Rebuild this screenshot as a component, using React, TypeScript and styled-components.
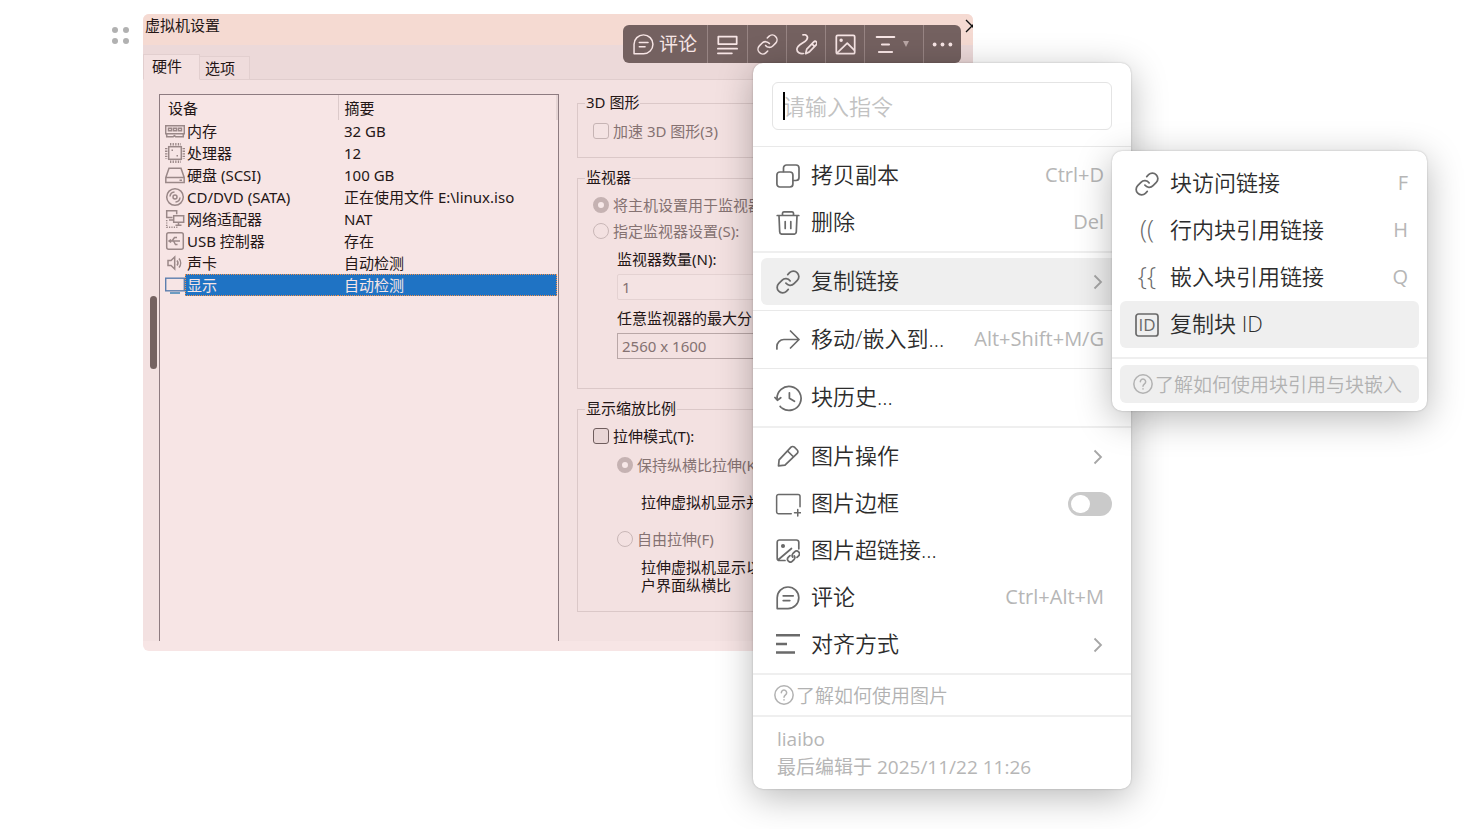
import React from "react";
import styled, { createGlobalStyle, css } from "styled-components";

const ink = "#241616";
const windowFont = `"Noto Sans", "Noto Sans CJK SC", sans-serif`;
const menuFont = `"Open Sans", "Noto Sans CJK SC", sans-serif`;

const GlobalStyle = createGlobalStyle`
  *, *::before, *::after { box-sizing: border-box; }
  html, body { margin: 0; padding: 0; background: #fff; }
  body { font-family: ${windowFont}; }
  button, input, select { font: inherit; color: inherit; margin: 0; }
  button { border: 0; background: none; padding: 0; cursor: pointer; }
`;

/* ---------- Editor block ---------- */

const Page = styled.main`
  position: relative;
  min-height: 100vh;
  padding: 14px 16px 16px 111px;
  overflow: hidden;
`;

const Block = styled.div`
  display: flex;
  align-items: flex-start;
  gap: 13px;
`;

const DragHandle = styled.button`
  flex: none;
  display: grid;
  grid-template-columns: 6px 6px;
  gap: 5px;
  width: 19px;
  padding: 13px 1px 0;
`;

const Dot = styled.span`
  width: 6px;
  height: 6px;
  border-radius: 50%;
  background: #b1b1b1;
`;

const Picture = styled.section`
  position: relative;
  flex: 0 1 830px;
  min-width: 0;
  overflow: hidden;
  border-radius: 6px;
  background: #f7e5e5;
  padding-bottom: 10px;
  color: ${ink};
  font-size: 15px;
  line-height: 18px;
`;

const ResizeGrip = styled.span`
  position: absolute;
  left: 7px;
  top: 282px;
  width: 7px;
  height: 73px;
  border-radius: 4px;
  background: #756261;
`;

const TitleBar = styled.header`
  display: flex;
  justify-content: space-between;
  height: 31px;
  padding: 2px 0 0 2px;
  background: #f5dad2;
`;

const CloseButton = styled.button`
  display: flex;
  height: 18px;
  width: 8px;
  overflow: hidden;
  svg { flex: none; }
`;

const TabStrip = styled.div`
  display: flex;
  align-items: flex-end;
  height: 35px;
  background: #ecd9d9;
  box-shadow: inset 0 -1px #e0cdcd;
`;

const Tab = styled.button<{ $active?: boolean }>`
  height: ${(p) => (p.$active ? 26 : 24)}px;
  width: ${(p) => (p.$active ? 57 : 50)}px;
  padding: 0 0 ${(p) => (p.$active ? 2 : 0)}px ${(p) => (p.$active ? 8 : 5)}px;
  text-align: left;
  line-height: 22px;
  background: ${(p) => (p.$active ? "#f3e1e1" : "#efdcdc")};
  border: 1px solid #e2cfcf;
  border-left-width: ${(p) => (p.$active ? 1 : 0)}px;
  border-bottom-color: ${(p) => (p.$active ? "#f3e1e1" : "#e2cfcf")};
`;

const Panel = styled.div`
  display: flex;
  gap: 18px;
  height: 561px;
  padding: 14px 12px 0 16px;
  background: #f3e1e1;
  overflow: hidden;
`;

const DeviceList = styled.div`
  flex: 0 0 400px;
  border: 1px solid #8d7b80;
  border-bottom: 0;
  background: #f7e5e5;
`;

const DeviceTable = styled.table`
  width: 100%;
  table-layout: fixed;
  border-collapse: collapse;
  th, td { padding: 0; text-align: left; font-weight: 400; white-space: nowrap; }
  th { height: 25px; border-right: 1px solid #dccaca; }
  th:first-child { width: 178px; padding-left: 8px; }
  th:last-child { padding-left: 6px; border-right: 2px solid #e6d5d5; }
`;

const DeviceRow = styled.tr<{ $selected?: boolean }>`
  height: 22px;
  td:last-child > span {
    display: block;
    height: 22px;
    padding-left: 6px;
    line-height: 22px;
  }
  ${(p) =>
    p.$selected &&
    css`
      color: #f7e5e5;
      td:last-child > span {
        background: #1f73c4;
        border: 1px dotted #f2914a;
        border-left: 0;
        line-height: 20px;
      }
    `}
`;

const DeviceName = styled.div<{ $selected?: boolean }>`
  display: flex;
  align-items: center;
  height: 22px;
  padding-left: 5px;
  svg { flex: none; width: 20px; height: 20px; }
  span {
    flex: 1;
    height: 22px;
    padding-left: 2px;
    line-height: 22px;
    ${(p) =>
      p.$selected &&
      css`
        background: #1f73c4;
        border: 1px dotted #f2914a;
        border-right: 0;
        padding-left: 1px;
        line-height: 20px;
      `}
  }
`;

const Settings = styled.form`
  flex: 1;
  min-width: 0;
  display: flex;
  flex-direction: column;
  gap: 11px;
`;

const Group = styled.fieldset<{ $h: number }>`
  flex: none;
  min-width: 0;
  height: ${(p) => p.$h}px;
  margin: 0;
  padding: 0 8px 0 15px;
  border: 1px solid #dbc8c8;
  white-space: nowrap;
  legend {
    margin-left: -8px;
    padding: 0 1px;
    height: 18px;
    line-height: 17px;
  }
`;

const Option = styled.label<{ $muted?: boolean; $indent?: number; $top?: number }>`
  display: flex;
  align-items: center;
  gap: 4px;
  height: 26px;
  margin-top: ${(p) => p.$top ?? 0}px;
  padding-left: ${(p) => p.$indent ?? 0}px;
  color: ${(p) => (p.$muted ? "#857272" : ink)};
`;

const Check = styled.input.attrs({ type: "checkbox" })`
  appearance: none;
  width: 16px;
  height: 16px;
  border: 1px solid #6f5d5d;
  border-radius: 3px;
  background: #e9d6d6;
  &:disabled { border-color: #c6b4b4; background: #f4e3e3; }
`;

const Radio = styled.input.attrs({ type: "radio" })`
  appearance: none;
  width: 16px;
  height: 16px;
  border: 1px solid #c9b7b7;
  border-radius: 50%;
  &:checked { border: 5px solid #c5b2b2; background: #f7e8e8; }
`;

const FieldLabel = styled.label<{ $top: number }>`
  display: block;
  margin: ${(p) => p.$top}px 0 0 24px;
  height: 18px;
`;

const NumberField = styled.input`
  display: block;
  width: calc(100% - 24px);
  height: 26px;
  margin: 6px 0 0 24px;
  padding: 0 4px;
  border: 1px solid #e4d2d2;
  border-radius: 2px;
  background: #f4e3e3;
  color: #857272;
`;

const ResolutionField = styled.select`
  appearance: none;
  display: block;
  width: calc(100% - 24px);
  height: 26px;
  margin: 6px 0 0 24px;
  padding: 0 4px;
  border: 1px solid #b9a7a7;
  background: #f3e1e1;
  color: #857272;
  opacity: 1;
`;

const Note = styled.p<{ $top: number }>`
  margin: ${(p) => p.$top}px 0 0 48px;
`;

/* ---------- Picture toolbar ---------- */

const Toolbar = styled.div`
  position: absolute;
  top: 11px;
  right: 12px;
  display: flex;
  height: 38px;
  border-radius: 6px;
  overflow: hidden;
  background: #746160;
  color: #f7e5e5;
  font-size: 19px;
`;

const ToolButton = styled.button<{ $w: number }>`
  display: flex;
  align-items: center;
  justify-content: center;
  gap: 5px;
  width: ${(p) => p.$w}px;
  white-space: nowrap;
  & + & { border-left: 1px solid #978483; }
  svg { flex: none; width: 21px; height: 21px; }
`;

const Arrow = styled.i`
  margin: 0 5px 0 2px;
  border: 3px solid transparent;
  border-top: 6px solid #b9a6a5;
  border-bottom: 0;
`;

/* ---------- Menus ---------- */

const floating = css`
  position: absolute;
  background: #fff;
  border-radius: 10px;
  box-shadow: 0 0 2px rgba(0, 0, 0, 0.24), 0 8px 36px rgba(0, 0, 0, 0.28);
  color: #2c2c2c;
  font-family: ${menuFont};
  font-size: 22px;
  font-weight: 350;
`;

const Menu = styled.nav`
  ${floating}
  top: 63px;
  left: 753px;
  width: 378px;
`;

const SubMenu = styled.nav`
  ${floating}
  top: 88px;
  left: 359px;
  width: 315px;
  padding: 9px 0 8px;
`;

const SearchBox = styled.div`
  position: relative;
  padding: 19px 19px 16px;
`;

const SearchInput = styled.input`
  display: block;
  width: 100%;
  height: 48px;
  padding: 0 10px;
  border: 1px solid #e4e4e4;
  border-radius: 6px;
  outline: 0;
  background: #fff;
  &::placeholder { color: #c2c2c2; opacity: 1; }
`;

const Caret = styled.span`
  position: absolute;
  left: 30px;
  top: 29px;
  width: 2px;
  height: 28px;
  background: #000;
`;

const Rule = styled.hr<{ $thick?: boolean; $above?: number; $below?: number }>`
  height: ${(p) => (p.$thick ? 2 : 1)}px;
  margin: ${(p) => p.$above ?? 5}px 0 ${(p) => p.$below ?? 5}px;
  border: 0;
  background: ${(p) => (p.$thick ? "#efefef" : "#e9e9e9")};
`;

const itemStyle = css<{ $on?: boolean; $end?: number }>`
  display: flex;
  align-items: center;
  gap: 11px;
  width: calc(100% - 16px);
  height: 47px;
  margin: 0 8px;
  padding: 0 ${(p) => p.$end ?? 19}px 0 15px;
  border-radius: 6px;
  background: ${(p) => (p.$on ? "#efefef" : "transparent")};
  text-align: left;
  white-space: nowrap;
`;

const Item = styled.button`
  ${itemStyle}
`;

const ToggleItem = styled.label`
  ${itemStyle}
`;

const Glyph = styled.span`
  display: flex;
  align-items: center;
  justify-content: center;
  flex: none;
  width: 24px;
  color: #6a6a6a;
  svg { flex: none; }
`;

const Bracket = styled.span`
  height: 36px;
  font-size: 26px;
  line-height: 30px;
`;

const Label = styled.span`
  flex: 1;
  height: 36px;
  line-height: 32px;
`;

const Shortcut = styled.kbd`
  height: 30px;
  font-family: ${menuFont};
  font-size: 20px;
  font-weight: 400;
  line-height: 28px;
  color: #b6b6b6;
`;

const Switch = styled.input.attrs({ type: "checkbox", role: "switch" })`
  appearance: none;
  position: relative;
  width: 44px;
  height: 24px;
  border-radius: 12px;
  background: #cacaca;
  &::after {
    content: "";
    position: absolute;
    left: 3px;
    top: 3px;
    width: 19px;
    height: 18px;
    border-radius: 9px;
    background: #fff;
  }
`;

const Help = styled.a<{ $boxed?: boolean }>`
  display: flex;
  align-items: center;
  gap: 2px;
  height: 38px;
  margin: 0 8px;
  padding-left: 13px;
  border-radius: 6px;
  background: ${(p) => (p.$boxed ? "#efefef" : "transparent")};
  color: #b2b2b2;
  font-size: 19px;
  text-decoration: none;
  white-space: nowrap;
`;

const Footer = styled.footer`
  padding: 8px 24px;
  color: #b6b6b6;
  font-size: 19px;
  font-weight: 400;
  line-height: 28px;
  p { margin: 0; }
`;

/* ---------- Icons ---------- */

type IconProps = { size?: number; sw?: number; box?: string; children: React.ReactNode };

const Icon = ({ size = 24, sw = 1.7, box = "0 0 24 24", children }: IconProps) => (
  <svg
    width={size}
    height={size}
    viewBox={box}
    fill="none"
    stroke="currentColor"
    strokeWidth={sw}
    strokeLinecap="round"
    strokeLinejoin="round"
    aria-hidden="true"
  >
    {children}
  </svg>
);

const CommentIcon = () => (
  <Icon>
    <path d="M1.2 11.8A10.8 10.8 0 1 1 12 22.6H1.2z" />
    <path d="M7.2 9.8h10M7.2 14.6h6.6" />
  </Icon>
);
const LinkIcon = () => (
  <Icon box="1 1 22 22" sw={1.6}>
    <path d="M10 13a5 5 0 0 0 7.540.540l3-3a5 5 0 0 0-7.070-7.070l-1.720 1.710" />
    <path d="M14 11a5 5 0 0 0-7.540-.540l-3 3a5 5 0 0 0 7.070 7.070l1.710-1.710" />
  </Icon>
);
const CaptionIcon = () => (
  <Icon sw={2}>
    <path d="M1.5 3h21v8.500h-21zM1 16.800h22M1 22h16" />
  </Icon>
);
const DrawIcon = () => (
  <Icon sw={2}>
    <path d="M8 1c4-.8 6.600 2.400 4 5.800C9.500 10.200 1 12 1 17.500c0 3.500 3.500 5.500 7.500 4.800" />
    <path d="M11 22.500l1.300-5.200 8-8.300a2 2 0 0 1 3 3l-8 8.400zM18.200 11.200l3 3" />
  </Icon>
);
const ImageIcon = () => (
  <Icon sw={2}>
    <rect x="1.500" y="1.500" width="21" height="21" rx="1.500" />
    <path d="M2.500 21.500L14 10.500l8 8" />
    <circle cx="7" cy="7" r="1" fill="currentColor" />
  </Icon>
);
const AlignCenterIcon = () => (
  <Icon sw={2.4}>
    <path d="M2 3.500h20M8 12h8M4.500 20.500h15" />
  </Icon>
);
const MoreIcon = () => (
  <svg viewBox="0 0 24 24" fill="currentColor" aria-hidden="true">
    <circle cx="3" cy="12" r="2.200" />
    <circle cx="12" cy="12" r="2.200" />
    <circle cx="21" cy="12" r="2.200" />
  </svg>
);
const CopyIcon = () => (
  <Icon>
    <rect x="0.900" y="8" width="16" height="15" rx="3" />
    <path d="M7.500 7.500V4a3 3 0 0 1 3-3H20a3 3 0 0 1 3 3v9.500a3 3 0 0 1-3 3h-2.500" />
  </Icon>
);
const TrashIcon = () => (
  <Icon>
    <path d="M1.200 4.500h21.600M6.500 4V2.200A1.500 1.500 0 0 1 8 .9h8a1.500 1.500 0 0 1 1.500 1.300V4M3 4.800l.7 16a2.400 2.400 0 0 0 2.400 2.400h11.800a2.400 2.400 0 0 0 2.400-2.400l.7-16M9.200 10.500v7M14.800 10.500v7" />
  </Icon>
);
const MoveIcon = () => (
  <Icon>
    <path d="M.9 21v-2.500a7 7 0 0 1 7-7h15M14.500 3l8.500 8.500-8.500 8.500" />
  </Icon>
);
const HistoryIcon = () => (
  <Icon size={28} sw={1.5}>
    <path d="M2.600 12.800A10.300 10.300 0 1 1 7 20.800M5.300 19.200l.6.700" />
    <path d="M.8 11.600l2.100 2.300 2.900-2.100M13.200 7.500v4.700l4.300 2.600" />
  </Icon>
);
const PencilIcon = () => (
  <Icon>
    <path d="M2.500 20.800l.6-6L15 2.200a2.400 2.400 0 0 1 3.400 0l2.800 2.800a2.400 2.400 0 0 1 0 3.400L9 20.200zM11.600 6l6 6" />
  </Icon>
);
const BorderIcon = () => (
  <Icon size={26} sw={1.4}>
    <path d="M15 21H3.300A1.800 1.800 0 0 1 1.500 19.200V5A1.800 1.800 0 0 1 3.300 3.200h18a1.800 1.800 0 0 1 1.800 1.800v9.500M21 17v6M18 20h6" />
  </Icon>
);
const ImageLinkIcon = () => (
  <Icon>
    <path d="M9 21.500H3.500a2.300 2.300 0 0 1-2.300-2.300V3.300A2.300 2.300 0 0 1 3.500 1h17a2.300 2.300 0 0 1 2.300 2.300v6.500M2.500 20.500L15.500 9.500" />
    <circle cx="7" cy="7" r="1.200" fill="currentColor" />
    <path d="M18.200 16.800a2.800 2.800 0 0 1 0 3.500l-1.800 1.900a2.800 2.800 0 0 1-4-4l1.600-1.600M16.800 18.200a2.800 2.800 0 0 1 0-3.500l1.800-1.900a2.800 2.800 0 0 1 4 4l-1.600 1.600" />
  </Icon>
);
const AlignIcon = () => (
  <svg width="24" height="24" viewBox="0 0 24 24" fill="currentColor" aria-hidden="true">
    <path d="M0 1h24v2.600H0zM0 9.700h11v2.600H0zM0 18.200h19v2.600H0z" />
  </svg>
);
const IdIcon = () => (
  <svg width="24" height="24" viewBox="0 0 24 24" aria-hidden="true">
    <rect x="1" y="1" width="22" height="22" rx="2.500" fill="none" stroke="currentColor" strokeWidth="1.700" />
    <text x="12" y="18" textAnchor="middle" fontFamily="Open Sans, sans-serif" fontSize="17" fontWeight="500" fill="currentColor">
      ID
    </text>
  </svg>
);
const Chevron = () => (
  <Glyph>
    <svg width="12" height="16" viewBox="0 0 12 16" fill="none" stroke="#a6a6a6" strokeWidth="1.800" aria-hidden="true">
      <path d="M2.500 1.500L9 8l-6.500 6.500" />
    </svg>
  </Glyph>
);
const HelpIcon = () => (
  <Icon size={20} sw={1.8}>
    <circle cx="12" cy="12" r="11" />
    <path d="M8.800 9.200a3.200 3.200 0 1 1 5 2.700c-1.200.9-1.800 1.400-1.800 2.800M12 17.600v.4" />
  </Icon>
);

const dev = { fill: "none", stroke: "#9a8888", strokeWidth: 1.5 };

const deviceIcons: Record<string, React.ReactNode> = {
  memory: (
    <svg viewBox="0 0 20 20" {...dev}>
      <path d="M.7 4.700h18.600v8H.7zM1.700 12.700v3h6.500l1.200-1 1.200 1h7.700v-3" />
      <path d="M3.500 7.200h3v2.500h-3zM8.500 7.200h3v2.500h-3zM13.500 7.200h3v2.500h-3z" />
    </svg>
  ),
  cpu: (
    <svg viewBox="0 0 20 20" {...dev}>
      <rect x="3.700" y="3.700" width="12.600" height="12.600" />
      <path d="M5 1.200h11M5 18.800h11M1.200 5v11M18.800 5v11" strokeWidth="2.400" strokeDasharray="1.300 1.300" />
      <path d="M6.500 7.200H8M11.500 12.800H13" strokeWidth="1.600" />
    </svg>
  ),
  disk: (
    <svg viewBox="0 0 20 20" {...dev}>
      <path d="M.8 12.500L4 3.200h12l3.200 9.300v5H.8zM.8 12.500h18.400M14.500 15.200H17" />
    </svg>
  ),
  disc: (
    <svg viewBox="0 0 20 20" {...dev}>
      <circle cx="10" cy="10" r="8.300" />
      <circle cx="10" cy="10" r="2" />
      <path d="M5 9.500a5 5 0 0 1 4.500-4.500M15 10.500a5 5 0 0 1-4.500 4.500" />
    </svg>
  ),
  network: (
    <svg viewBox="0 0 20 20" {...dev}>
      <path d="M7.500 8.500H1.700V1.700h10v3.500M4 11h4" />
      <path d="M8.700 6.700h10v6.600h-10zM13.500 13.300V16M10.500 16.200h6" />
      <path d="M1.700 11v7.300H13" strokeDasharray="1.200 1.200" />
    </svg>
  ),
  usb: (
    <svg viewBox="0 0 20 20" {...dev}>
      <rect x="1.700" y="1.700" width="16.600" height="16.600" rx="2" />
      <path d="M4.500 10h10.500M7 10l2.500-3.500h2.500M8.500 10l2 3.500h2M6 8.500L4 10l2 1.500" />
    </svg>
  ),
  sound: (
    <svg viewBox="0 0 20 20" {...dev}>
      <path d="M3 7.500h3L9.700 4v12L6 12.500H3zM12 7.500a4 4 0 0 1 0 5M14 5.500a7 7 0 0 1 0 9" />
    </svg>
  ),
  display: (
    <svg viewBox="0 0 20 20" fill="none">
      <rect x=".7" y="3.200" width="18.600" height="12.600" stroke="#5d7fae" strokeWidth="1.400" />
      <path d="M5 18h10" stroke="#5d93bd" strokeWidth="1.800" />
    </svg>
  ),
};

const devices = [
  { icon: "memory", name: "内存", summary: "32 GB" },
  { icon: "cpu", name: "处理器", summary: "12" },
  { icon: "disk", name: "硬盘 (SCSI)", summary: "100 GB" },
  { icon: "disc", name: "CD/DVD (SATA)", summary: "正在使用文件 E:\\linux.iso" },
  { icon: "network", name: "网络适配器", summary: "NAT" },
  { icon: "usb", name: "USB 控制器", summary: "存在" },
  { icon: "sound", name: "声卡", summary: "自动检测" },
  { icon: "display", name: "显示", summary: "自动检测", selected: true },
];

type EntryProps = {
  icon: React.ReactNode;
  label: string;
  hint?: string;
  more?: boolean;
  on?: boolean;
  end?: number;
};

const Entry = ({ icon, label, hint, more, on, end }: EntryProps) => (
  <Item type="button" $on={on} $end={more ? 13 : end}>
    <Glyph>{icon}</Glyph>
    <Label>{label}</Label>
    {hint && <Shortcut>{hint}</Shortcut>}
    {more && <Chevron />}
  </Item>
);

const SettingsWindow = () => (
  <>
    <TitleBar>
      <span>虚拟机设置</span>
      <CloseButton aria-label="关闭">
        <svg width="14" height="18" viewBox="0 0 14 18" fill="none" stroke="#111" strokeWidth="1.300">
          <path d="M1 4l12 12M1 16l12-12" />
        </svg>
      </CloseButton>
    </TitleBar>
    <TabStrip>
      <Tab $active>硬件</Tab>
      <Tab>选项</Tab>
    </TabStrip>
    <Panel>
      <DeviceList>
        <DeviceTable>
          <thead>
            <tr>
              <th>设备</th>
              <th>摘要</th>
            </tr>
          </thead>
          <tbody>
            {devices.map((d) => (
              <DeviceRow key={d.name} $selected={d.selected}>
                <td>
                  <DeviceName $selected={d.selected}>
                    {deviceIcons[d.icon]}
                    <span>{d.name}</span>
                  </DeviceName>
                </td>
                <td>
                  <span>{d.summary}</span>
                </td>
              </DeviceRow>
            ))}
          </tbody>
        </DeviceTable>
      </DeviceList>
      <Settings>
        <Group $h={64}>
          <legend>3D 图形</legend>
          <Option $muted $top={6}>
            <Check disabled />
            加速 3D 图形(3)
          </Option>
        </Group>
        <Group $h={220}>
          <legend>监视器</legend>
          <Option $muted $top={5}>
            <Radio name="monitor" defaultChecked />
            将主机设置用于监视器
          </Option>
          <Option $muted>
            <Radio name="monitor" />
            指定监视器设置(S):
          </Option>
          <FieldLabel $top={6} htmlFor="count">监视器数量(N):</FieldLabel>
          <NumberField id="count" defaultValue="1" disabled />
          <FieldLabel $top={9} htmlFor="resolution">任意监视器的最大分</FieldLabel>
          <ResolutionField id="resolution" disabled>
            <option>2560 x 1600</option>
          </ResolutionField>
        </Group>
        <Group $h={212}>
          <legend>显示缩放比例</legend>
          <Option $top={5}>
            <Check />
            拉伸模式(T):
          </Option>
          <Option $muted $indent={24} $top={3}>
            <Radio name="stretch" defaultChecked />
            保持纵横比拉伸(K)
          </Option>
          <Note $top={15}>拉伸虚拟机显示并</Note>
          <Option $muted $indent={24} $top={15}>
            <Radio name="stretch" />
            自由拉伸(F)
          </Option>
          <Note $top={6}>
            拉伸虚拟机显示以
            <br />
            户界面纵横比
          </Note>
        </Group>
      </Settings>
    </Panel>
  </>
);

export default function App() {
  return (
    <Page>
      <GlobalStyle />
      <Block>
        <DragHandle aria-label="拖动">
          <Dot />
          <Dot />
          <Dot />
          <Dot />
        </DragHandle>
        <Picture>
          <SettingsWindow />
          <ResizeGrip />
          <Toolbar>
            <ToolButton $w={84}>
              <CommentIcon />
              评论
            </ToolButton>
            <ToolButton $w={40} aria-label="标题"><CaptionIcon /></ToolButton>
            <ToolButton $w={39} aria-label="链接"><LinkIcon /></ToolButton>
            <ToolButton $w={39} aria-label="标注"><DrawIcon /></ToolButton>
            <ToolButton $w={39} aria-label="图片"><ImageIcon /></ToolButton>
            <ToolButton $w={59} aria-label="对齐">
              <AlignCenterIcon />
              <Arrow />
            </ToolButton>
            <ToolButton $w={38} aria-label="更多"><MoreIcon /></ToolButton>
          </Toolbar>
        </Picture>
      </Block>

      <Menu>
        <SearchBox>
          <SearchInput placeholder="请输入指令" aria-label="指令" />
          <Caret />
        </SearchBox>
        <Rule $above={0} />
        <Entry icon={<CopyIcon />} label="拷贝副本" hint="Ctrl+D" />
        <Entry icon={<TrashIcon />} label="删除" hint="Del" />
        <Rule $thick />
        <Entry icon={<LinkIcon />} label="复制链接" more on />
        <Rule />
        <Entry icon={<MoveIcon />} label="移动/嵌入到..." hint="Alt+Shift+M/G" />
        <Rule />
        <Entry icon={<HistoryIcon />} label="块历史..." />
        <Rule $thick />
        <Entry icon={<PencilIcon />} label="图片操作" more />
        <ToggleItem $end={11}>
          <Glyph><BorderIcon /></Glyph>
          <Label>图片边框</Label>
          <Switch />
        </ToggleItem>
        <Entry icon={<ImageLinkIcon />} label="图片超链接..." />
        <Entry icon={<CommentIcon />} label="评论" hint="Ctrl+Alt+M" />
        <Entry icon={<AlignIcon />} label="对齐方式" more />
        <Rule $thick $below={1} />
        <Help href="#image-help">
          <HelpIcon />
          了解如何使用图片
        </Help>
        <Rule $thick $above={1} $below={0} />
        <Footer>
          <p>liaibo</p>
          <p>最后编辑于 2025/11/22 11:26</p>
        </Footer>

        <SubMenu>
          <Entry icon={<LinkIcon />} label="块访问链接" hint="F" end={11} />
          <Entry icon={<Bracket>((</Bracket>} label="行内块引用链接" hint="H" end={11} />
          <Entry icon={<Bracket>{"{{"}</Bracket>} label="嵌入块引用链接" hint="Q" end={11} />
          <Entry icon={<IdIcon />} label="复制块 ID" on end={11} />
          <Rule $thick $above={9} $below={6} />
          <Help href="#ref-help" $boxed>
            <HelpIcon />
            了解如何使用块引用与块嵌入
          </Help>
        </SubMenu>
      </Menu>
    </Page>
  );
}
